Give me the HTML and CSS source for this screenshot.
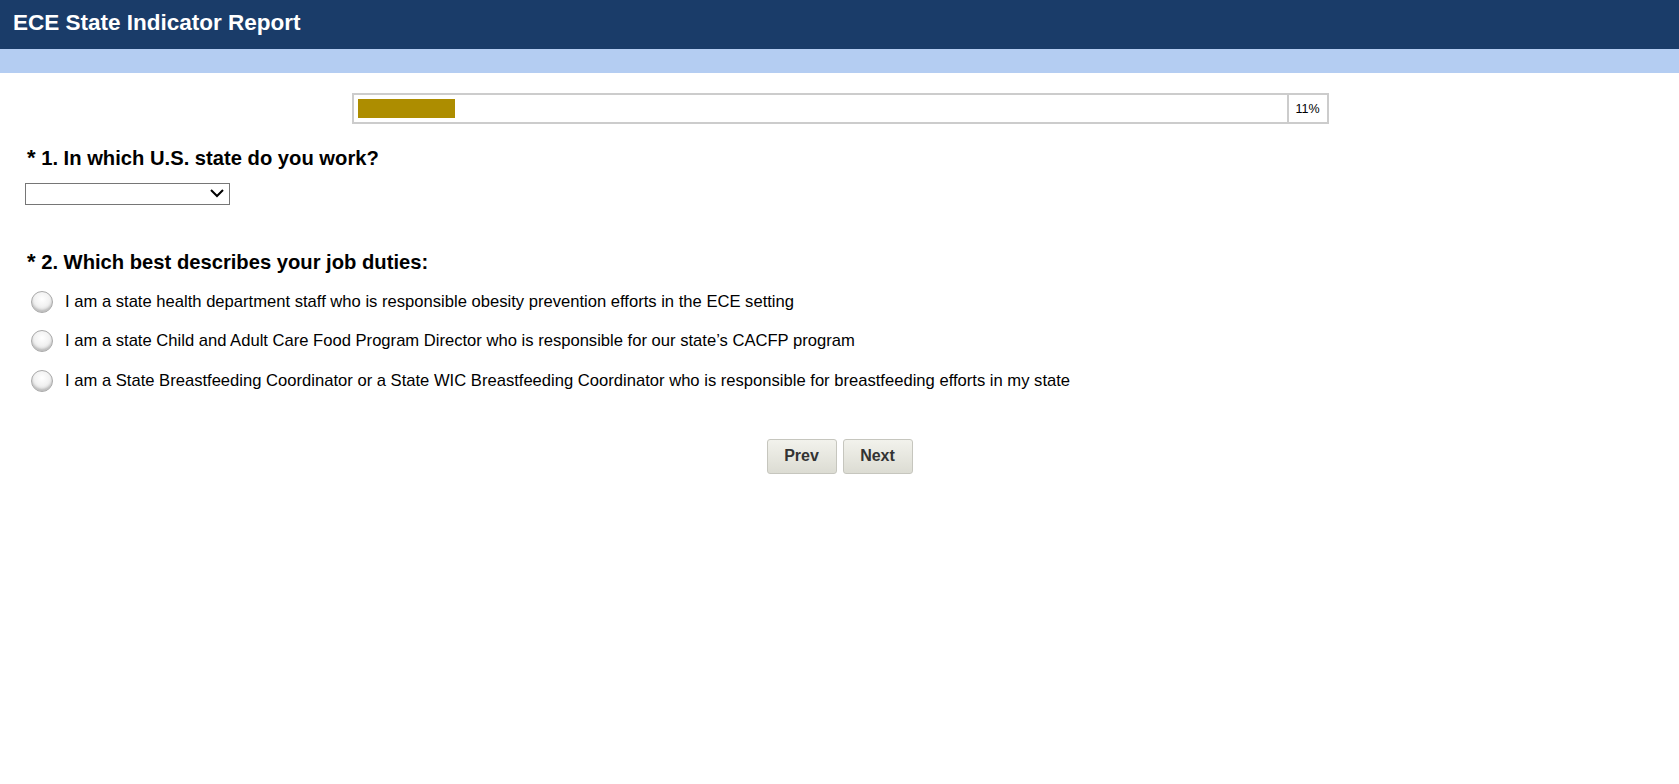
FILE: index.html
```html
<!DOCTYPE html>
<html lang="en">
<head>
    <meta charset="UTF-8">
    <title>ECE State Indicator Report</title>
    <link rel="stylesheet" href="styles.css">
</head>
<body>
    <div class="header">
        <h1>ECE State Indicator Report</h1>
    </div>
    <div class="subbar"></div>

    <div class="content">
        <table class="progress">
            <tr>
                <td class="progress-track"><div class="progress-fill" style="width: 97px"></div></td>
                <td class="progress-pct">11%</td>
            </tr>
        </table>

        <div class="question">
            <h2><span class="req">*</span> 1. In which U.S. state do you work?</h2>
            <div class="select-wrap">
                <select class="state-select">
                    <option></option>
                </select>
                <svg class="select-arrow" width="14" height="9" viewBox="0 0 14 9">
                    <path d="M1 1 L7 7 L13 1" fill="none" stroke="#000" stroke-width="2"/>
                </svg>
            </div>
        </div>

        <div class="question">
            <h2><span class="req">*</span> 2. Which best describes your job duties:</h2>
            <div class="choices">
                <label class="choice"><span class="radio"></span>I am a state health department staff who is responsible obesity prevention efforts in the ECE setting</label>
                <label class="choice"><span class="radio"></span>I am a state Child and Adult Care Food Program Director who is responsible for our state’s CACFP program</label>
                <label class="choice"><span class="radio"></span>I am a State Breastfeeding Coordinator or a State WIC Breastfeeding Coordinator who is responsible for breastfeeding efforts in my state</label>
            </div>
        </div>

        <div class="nav-buttons">
            <button>Prev</button>
            <button>Next</button>
        </div>
    </div>
</body>
</html>
```

FILE: styles.css
```css
body {
    font-family: "Liberation Sans", Arial, sans-serif;
    color: #000;
    background: #fff;
    margin: 0;
    padding: 0;
}
.header {
    background: #1a3c69; /* Dark navy */
    height: 49px;
    display: flex;
    align-items: center;
    padding-left: 13px;
}
.header h1 {
    margin: 0;
    color: #fff;
    font-size: 22.5px;
    font-weight: bold;
    padding-bottom: 3px;
}
.subbar {
    background: #b4cdf2; /* Light blue band */
    height: 24px;
}
.content {
    padding: 20px 0 0 25px;
}
.progress {
    width: 977px;
    margin: 0 auto;
    border-collapse: collapse;
    border: 2px solid #cccccc;
    position: relative;
    left: -12px;
}
.progress td {
    padding: 0;
}
.progress-track {
    padding: 4px 4px 4px 4px !important;
}
.progress-fill {
    height: 19px;
    background: #ad8d00; /* Gold */
}
.progress-pct {
    width: 38px;
    border-left: 2px solid #cccccc;
    font-size: 12.5px;
    text-align: center;
}
.question {
    margin-top: 21px;
}
.question h2 {
    font-size: 20.2px;
    font-weight: bold;
    margin: 0 0 12px 2px;
}
.req {
    font-size: 22px;
}
.select-wrap {
    position: relative;
    width: 205px;
    height: 22px;
    margin-bottom: 44px;
}
.state-select {
    appearance: none;
    -webkit-appearance: none;
    width: 205px;
    height: 22px;
    border: 1px solid #767676;
    border-radius: 0;
    background: #fff;
    font-size: 13px;
    margin: 0;
}
.select-arrow {
    position: absolute;
    right: 6px;
    top: 6px;
    pointer-events: none;
}
.choices {
    margin-top: -5px;
}
.choice {
    display: flex;
    align-items: center;
    font-size: 16.6px;
    height: 39.6px;
    margin-left: 6px;
}
.radio {
    width: 20px;
    height: 20px;
    border-radius: 50%;
    border: 1px solid #a9a9a9;
    background: radial-gradient(circle at 50% 35%, #ffffff 0%, #f2f2f2 45%, #c8c8c8 100%);
    box-shadow: inset 0 -2px 2px rgba(0, 0, 0, 0.14);
    margin-right: 12px;
}
.nav-buttons {
    display: flex;
    justify-content: center;
    gap: 6px;
    margin: 38px 0 0 -25px;
}
.nav-buttons button {
    width: 70px;
    height: 35px;
    font-family: "Liberation Sans", Arial, sans-serif;
    font-size: 16px;
    font-weight: bold;
    color: #333;
    border: 1px solid #c6c6be;
    border-radius: 3px;
    background: linear-gradient(#f2f2ec, #dcdcd3);
    cursor: pointer;
}
```
